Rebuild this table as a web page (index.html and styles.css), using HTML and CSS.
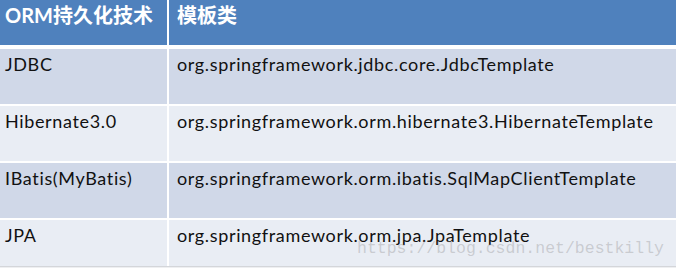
FILE: index.html
```html
<!DOCTYPE html>
<html lang="zh">
<head>
<meta charset="utf-8">
<title>ORM持久化技术</title>
<link rel="stylesheet" href="styles.css">
</head>
<body>
<div class="sheet">
  <div class="grid header">
    <div class="cell head first">ORM持久化技术</div>
    <div class="cell head second">模板类</div>
  </div>
  <div class="grid rows">
    <div class="cell dark first">JDBC</div>
    <div class="cell dark second">org.springframework.jdbc.core.JdbcTemplate</div>

    <div class="cell light first">Hibernate3.0</div>
    <div class="cell light second">org.springframework.orm.hibernate3.HibernateTemplate</div>

    <div class="cell dark first">IBatis(MyBatis)</div>
    <div class="cell dark second">org.springframework.orm.ibatis.SqlMapClientTemplate</div>

    <div class="cell light first">JPA</div>
    <div class="cell light second">org.springframework.orm.jpa.JpaTemplate</div>
  </div>
  <div class="footer"></div>
  <div class="watermark">https://blog.csdn.net/bestkilly</div>
</div>
</body>
</html>
```
FILE: styles.css
```css
html, body {
  margin: 0;
  padding: 0;
  background: #ffffff;
}
.sheet {
  position: relative;
  width: 676px;
  height: 268px;
  overflow: hidden;
  background: #ffffff;
}
.grid {
  display: grid;
  grid-template-columns: 167px 1fr;
  column-gap: 2px;
}
.header {
  grid-template-rows: 45px;
  margin-bottom: 4px;
}
.rows {
  grid-template-rows: 55px 55px 55px 46px;
  row-gap: 2px;
}
.cell {
  font-family: Lato, "Noto Sans CJK SC", sans-serif;
  font-size: 18px;
  letter-spacing: 0.65px;
  line-height: 20px;
  color: #111111;
  padding-top: 5px;
  box-sizing: border-box;
  white-space: nowrap;
}
.first { padding-left: 5px; }
.second { padding-left: 8px; }
.head {
  background: #4f81bd;
  color: #ffffff;
  font-weight: bold;
  font-size: 20px;
  letter-spacing: 0;
  line-height: 22px;
  padding-top: 4px;
}
.dark { background: #d0d8e8; }
.light { background: #e9edf4; }
.footer {
  height: 2px;
  border-top: 1px solid #d4d6da;
  background: #eeeff1;
}
.watermark {
  position: absolute;
  left: 357px;
  top: 240px;
  font-family: "Liberation Mono", monospace;
  font-size: 16.5px;
  line-height: 18px;
  color: rgba(140, 140, 140, 0.35);
  white-space: nowrap;
}
```
